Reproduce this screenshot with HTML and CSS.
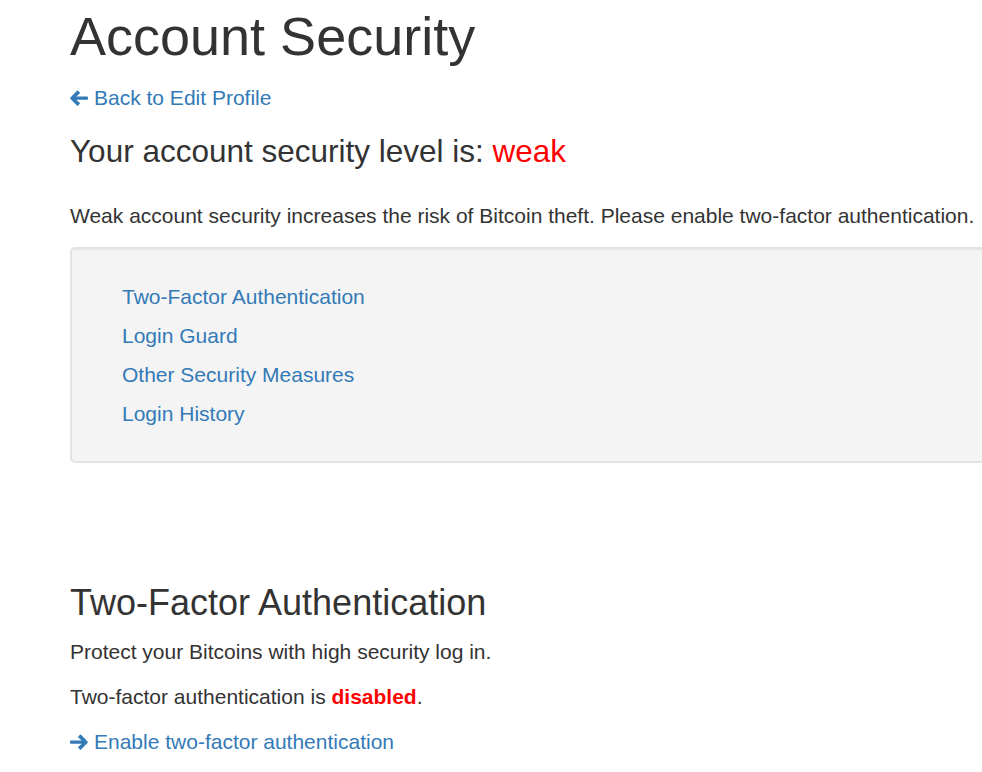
FILE: index.html
```html
<!DOCTYPE html>
<html lang="en">
<head>
<meta charset="utf-8">
<title>Account Security</title>
<link rel="stylesheet" href="styles.css">
</head>
<body>
<div class="page">
  <h1 class="title">Account Security</h1>
  <p class="back"><a href="#" class="link"><svg class="icon" viewBox="0 0 16 14" aria-hidden="true"><path d="M7.2 0.6 L8.6 2 Q9.1 2.5 8.6 3 L5.6 5.6 H15 Q16 5.6 16 6.6 V7.6 Q16 8.6 15 8.6 H5.6 L8.6 11.2 Q9.1 11.7 8.6 12.2 L7.2 13.6 Q6.7 14.1 6.2 13.6 L0.4 7.8 Q0 7.1 0.4 6.5 L6.2 0.6 Q6.7 0.1 7.2 0.6 Z"/></svg>Back to Edit Profile</a></p>
  <h3 class="level">Your account security level is: <span class="red">weak</span></h3>
  <p class="warn">Weak account security increases the risk of Bitcoin theft. Please enable two-factor authentication.</p>
  <div class="well">
    <ul class="toc">
      <li><a href="#" class="link">Two-Factor Authentication</a></li>
      <li><a href="#" class="link">Login Guard</a></li>
      <li><a href="#" class="link">Other Security Measures</a></li>
      <li><a href="#" class="link">Login History</a></li>
    </ul>
  </div>
  <h2 class="section">Two-Factor Authentication</h2>
  <p class="text">Protect your Bitcoins with high security log in.</p>
  <p class="text">Two-factor authentication is <strong class="red">disabled</strong>.</p>
  <p class="text"><a href="#" class="link"><svg class="icon" viewBox="0 0 16 14" aria-hidden="true"><path d="M8.8 0.6 L7.4 2 Q6.9 2.5 7.4 3 L10.4 5.6 H1 Q0 5.6 0 6.6 V7.6 Q0 8.6 1 8.6 H10.4 L7.4 11.2 Q6.9 11.7 7.4 12.2 L8.8 13.6 Q9.3 14.1 9.8 13.6 L15.6 7.8 Q16 7.1 15.6 6.5 L9.8 0.6 Q9.3 0.1 8.8 0.6 Z"/></svg>Enable two-factor authentication</a></p>
</div>
</body>
</html>
```

FILE: styles.css
```css
html, body {
  margin: 0;
  padding: 0;
  overflow: hidden;
  background: #fff;
}
body {
  font-family: "Liberation Sans", Arial, sans-serif;
  font-size: 21px;
  line-height: 30px;
  color: #333;
}
.page {
  padding-left: 70px;
  width: 1100px;
}
.title {
  font-size: 54px;
  font-weight: 400;
  line-height: 60px;
  margin: 6px 0 0;
}
.back {
  margin: 17px 0 0;
}
.link {
  color: #337ab7;
  text-decoration: none;
}
.icon {
  width: 18px;
  height: 16px;
  fill: #337ab7;
  margin-right: 6px;
  vertical-align: -1px;
}
.level {
  font-size: 31.5px;
  font-weight: 400;
  line-height: 34px;
  margin: 21px 0 0;
}
.red {
  color: #ff0000;
}
.warn {
  margin: 33px 0 0;
}
.well {
  margin-top: 16px;
  background: #f4f4f4;
  border: 2px solid #e3e3e3;
  border-radius: 5px;
  box-shadow: inset 0 1px 1px rgba(0,0,0,.05);
  padding: 28px 0 28px 50px;
}
.toc {
  list-style: none;
  margin: 0;
  padding: 0;
  line-height: 39px;
}
.section {
  font-size: 36px;
  font-weight: 400;
  line-height: 40px;
  margin: 120px 0 0;
}
.text {
  margin: 14px 0 0;
}
.text + .text {
  margin-top: 15px;
}
```
